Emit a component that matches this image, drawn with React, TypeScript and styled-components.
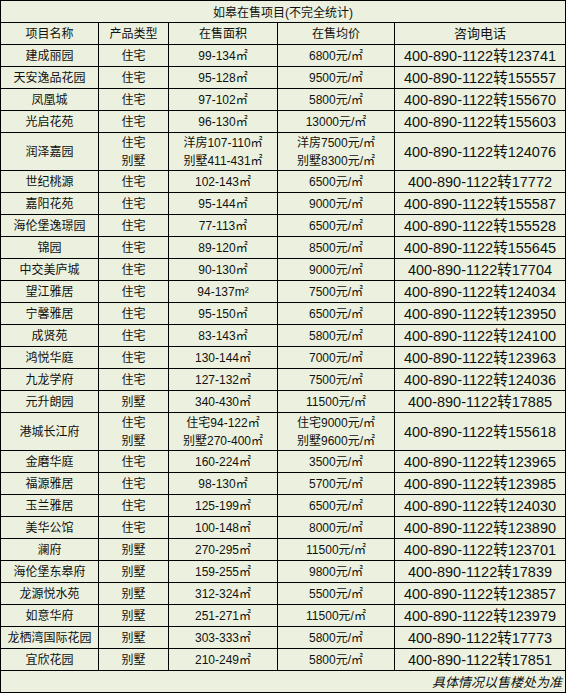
import React from "react";
import styled, { createGlobalStyle } from "styled-components";

const Global = createGlobalStyle`
  html, body { margin: 0; padding: 0; background: #ffffff; }
  #root { width: 567px; }
`;

const Table = styled.div`
  display: grid;
  grid-template-columns: 97px 69px 108px 116px 170px;
  gap: 1px;
  width: 566px;
  box-sizing: border-box;
  border: 1px solid #000;
  background: #000;
  font-family: "Liberation Sans", "Noto Sans CJK SC", sans-serif;
  color: #111;
`;

const Cell = styled.div<{ $tall?: boolean; $phone?: boolean }>`
  background: #ebf1de;
  height: ${(p) => (p.$tall ? 37 : 21)}px;
  display: flex;
  flex-direction: column;
  align-items: center;
  justify-content: center;
  font-size: ${(p) => (p.$phone ? 14.5 : 12)}px;
  line-height: 18px;
  white-space: nowrap;
  overflow: hidden;
`;

const Title = styled.div`
  grid-column: 1 / -1;
  background: #ebf1de;
  height: 21px;
  display: flex;
  align-items: center;
  justify-content: center;
  font-size: 12px;
`;

const Head = styled(Cell)<{ $big?: boolean }>`
  font-size: ${(p) => (p.$big ? 13 : 12)}px;
`;

const Footer = styled.div`
  grid-column: 1 / -1;
  background: #ebf1de;
  height: 21px;
  display: flex;
  align-items: center;
  justify-content: flex-end;
  padding-right: 3px;
  font-size: 13px;
  font-style: italic;
`;

type Row = {
  name: string;
  types: string[];
  areas: string[];
  prices: string[];
  ext: string;
};

const M = "㎡";

const rows: Row[] = [
  { name: "建成丽园", types: ["住宅"], areas: [`99-134${M}`], prices: [`6800元/${M}`], ext: "123741" },
  { name: "天安逸品花园", types: ["住宅"], areas: [`95-128${M}`], prices: [`9500元/${M}`], ext: "155557" },
  { name: "凤凰城", types: ["住宅"], areas: [`97-102${M}`], prices: [`5800元/${M}`], ext: "155670" },
  { name: "光启花苑", types: ["住宅"], areas: [`96-130${M}`], prices: [`13000元/${M}`], ext: "155603" },
  {
    name: "润泽嘉园",
    types: ["住宅", "别墅"],
    areas: [`洋房107-110${M}`, `别墅411-431${M}`],
    prices: [`洋房7500元/${M}`, `别墅8300元/${M}`],
    ext: "124076",
  },
  { name: "世纪桃源", types: ["住宅"], areas: [`102-143${M}`], prices: [`6500元/${M}`], ext: "17772" },
  { name: "嘉阳花苑", types: ["住宅"], areas: [`95-144${M}`], prices: [`9000元/${M}`], ext: "155587" },
  { name: "海伦堡逸璟园", types: ["住宅"], areas: [`77-113${M}`], prices: [`6500元/${M}`], ext: "155528" },
  { name: "锦园", types: ["住宅"], areas: [`89-120${M}`], prices: [`8500元/${M}`], ext: "155645" },
  { name: "中交美庐城", types: ["住宅"], areas: [`90-130${M}`], prices: [`9000元/${M}`], ext: "17704" },
  { name: "望江雅居", types: ["住宅"], areas: ["94-137m²"], prices: [`7500元/${M}`], ext: "124034" },
  { name: "宁馨雅居", types: ["住宅"], areas: [`95-150${M}`], prices: [`6500元/${M}`], ext: "123950" },
  { name: "成贤苑", types: ["住宅"], areas: [`83-143${M}`], prices: [`5800元/${M}`], ext: "124100" },
  { name: "鸿悦华庭", types: ["住宅"], areas: [`130-144${M}`], prices: [`7000元/${M}`], ext: "123963" },
  { name: "九龙学府", types: ["住宅"], areas: [`127-132${M}`], prices: [`7500元/${M}`], ext: "124036" },
  { name: "元升朗园", types: ["别墅"], areas: [`340-430${M}`], prices: [`11500元/${M}`], ext: "17885" },
  {
    name: "港城长江府",
    types: ["住宅", "别墅"],
    areas: [`住宅94-122${M}`, `别墅270-400${M}`],
    prices: [`住宅9000元/${M}`, `别墅9600元/${M}`],
    ext: "155618",
  },
  { name: "金磨华庭", types: ["住宅"], areas: [`160-224${M}`], prices: [`3500元/${M}`], ext: "123965" },
  { name: "福源雅居", types: ["住宅"], areas: [`98-130${M}`], prices: [`5700元/${M}`], ext: "123985" },
  { name: "玉兰雅居", types: ["住宅"], areas: [`125-199${M}`], prices: [`6500元/${M}`], ext: "124030" },
  { name: "美华公馆", types: ["住宅"], areas: [`100-148${M}`], prices: [`8000元/${M}`], ext: "123890" },
  { name: "澜府", types: ["别墅"], areas: [`270-295${M}`], prices: [`11500元/${M}`], ext: "123701" },
  { name: "海伦堡东皋府", types: ["别墅"], areas: [`159-255${M}`], prices: [`9800元/${M}`], ext: "17839" },
  { name: "龙源悦水苑", types: ["别墅"], areas: [`312-324${M}`], prices: [`5500元/${M}`], ext: "123857" },
  { name: "如意华府", types: ["别墅"], areas: [`251-271${M}`], prices: [`11500元/${M}`], ext: "123979" },
  { name: "龙栖湾国际花园", types: ["别墅"], areas: [`303-333${M}`], prices: [`5800元/${M}`], ext: "17773" },
  { name: "宜欣花园", types: ["别墅"], areas: [`210-249${M}`], prices: [`5800元/${M}`], ext: "17851" },
];

const Lines = ({ items }: { items: string[] }) => (
  <>
    {items.map((t, i) => (
      <span key={i}>{t}</span>
    ))}
  </>
);

export default function App() {
  return (
    <>
      <Global />
      <Table>
        <Title>如皋在售项目(不完全统计)</Title>
        <Head>项目名称</Head>
        <Head>产品类型</Head>
        <Head>在售面积</Head>
        <Head>在售均价</Head>
        <Head $big>咨询电话</Head>
        {rows.map((r) => {
          const tall = r.types.length > 1;
          return (
            <React.Fragment key={r.name}>
              <Cell $tall={tall}>{r.name}</Cell>
              <Cell $tall={tall}>
                <Lines items={r.types} />
              </Cell>
              <Cell $tall={tall}>
                <Lines items={r.areas} />
              </Cell>
              <Cell $tall={tall}>
                <Lines items={r.prices} />
              </Cell>
              <Cell $tall={tall} $phone>
                400-890-1122转{r.ext}
              </Cell>
            </React.Fragment>
          );
        })}
        <Footer>具体情况以售楼处为准</Footer>
      </Table>
    </>
  );
}
